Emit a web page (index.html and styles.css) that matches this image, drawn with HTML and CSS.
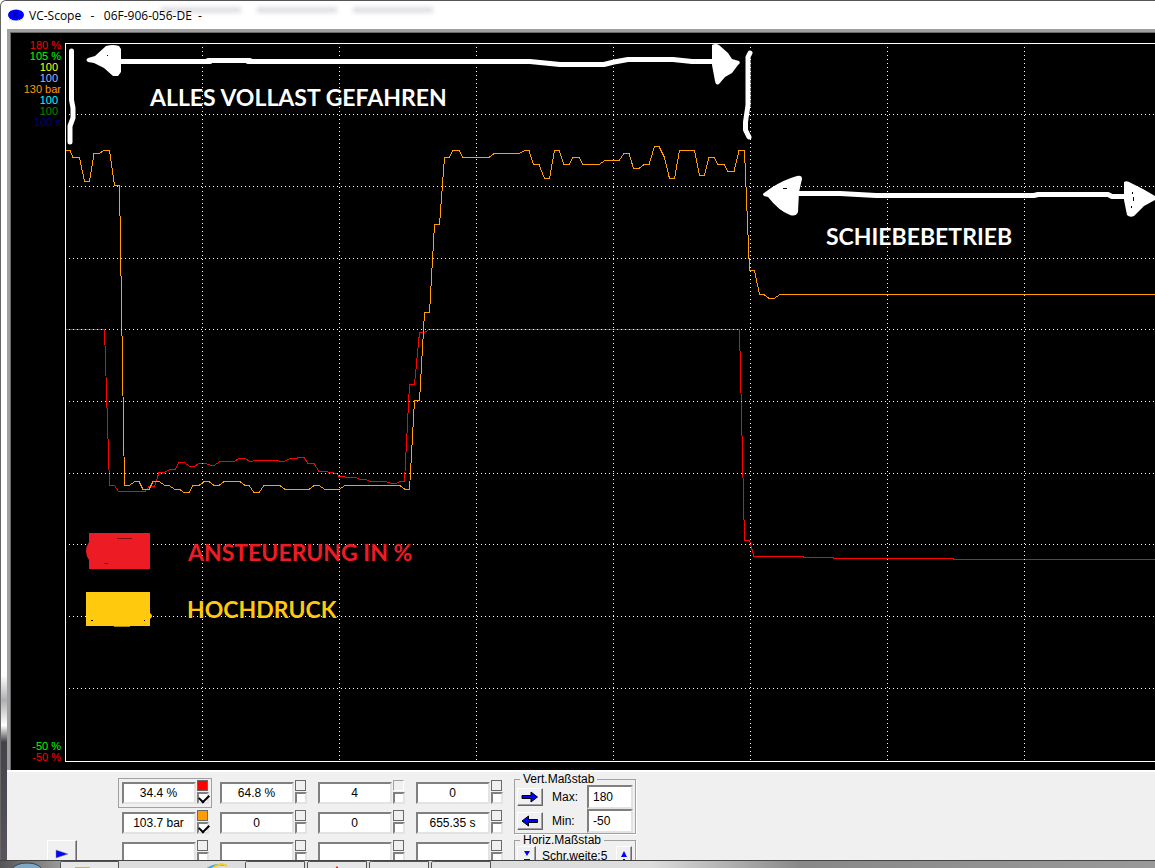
FILE: index.html
```
<!DOCTYPE html>
<html lang="de">
<head>
    <meta charset="UTF-8">
    <meta name="viewport" content="width=device-width, initial-scale=1.0">
    <title>VC-Scope</title>
    <link rel="stylesheet" href="styles.css">
</head>
<body>
    <header class="titlebar">
        <svg class="logo" width="17" height="14" viewBox="0 0 17 14">
            <ellipse cx="8" cy="7" rx="8" ry="5.5" fill="#0000ff"/>
            <path d="M6 4v6M10 4L6 7l4 3" stroke="#000090" fill="none"/>
            <path d="M1 12h3M10 12h5" stroke="#e0d060" stroke-dasharray="1 1"/>
        </svg>
        <h1>VC-Scope &nbsp; - &nbsp; 06F-906-056-DE &nbsp;-</h1>
        <div class="glass"><i></i><i></i><i></i></div>
    </header>

    <main class="client">
        <section class="scope">
            <div class="axis">
                <ul>
                    <li class="red">180 %</li>
                    <li class="green">105 %</li>
                    <li class="yellow unitless">100</li>
                    <li class="lilac unitless">100</li>
                    <li class="orange">130 bar</li>
                    <li class="cyan unitless">100</li>
                    <li class="darkgreen unitless">100</li>
                    <li class="navy">100 s</li>
                </ul>
                <ul>
                    <li class="green">-50 %</li>
                    <li class="red">-50 %</li>
                </ul>
            </div>
            <svg class="plot">
                <g transform="translate(-65 -33)">
                    <path class="frame" d="M3000 43.5H65.5V761.5H3000"/>

                    <!-- red: Ansteuerung, orange: Hochdruck -->
                    <polyline class="trace trace-red" points="66,329.5 104.5,329.5 109.5,485.5 114.5,485.5 118.5,491.5 145,491.5 149,486.5 154.5,486.5 159,472.5 164,472.5 170,469.5 175,469.5 179,462.5 184,462.5 190,466.5 194,466.5 199,463.5 206,463.5 211,465.5 214,465.5 220,461.5 234,461.5 239,458.5 245,458.5 250,461.5 256,460.5 278,460.5 280,461.5 284,461.5 290,458.5 296,458.5 299,457.5 304,457.5 308,463.5 314,463.5 319,471.5 325,471.5 337,473.5 339,476.5 350,477.5 356,477.5 360,479.5 366,479.5 370,481.5 386,481.5 391,483.5 396,483.5 400,481.5 404.5,481.5 409.5,384.5 414.5,384.5 419.5,332.5 424.5,332.5 429,329.5 739.5,329.5 744.5,540.5 749.5,540.5 754,556.5 803,556.5 803,557.5 833,557.5 833,558.5 953,558.5 953,559.5 3000,559.5"/>
                    <polyline class="trace trace-orange" points="66,150.5 70,150.5 73,157.5 79.5,157.5 84.5,181.5 89.5,181.5 94,153.5 99,153.5 104,150.5 109.5,150.5 114.5,185.5 119.5,185.5 124.5,485.5 129,485.5 135,481.5 139,481.5 143,489.5 149,489.5 153,481.5 159,481.5 165,485.5 169,485.5 175,489.5 180,489.5 184,492.5 189,492.5 193,485.5 199,485.5 204,481.5 209,481.5 214,485.5 219,485.5 224,481.5 240,481.5 245,485.5 249,485.5 254,492.5 259,492.5 264,485.5 280,485.5 285,489.5 309,489.5 314,485.5 319,485.5 325,489.5 339,489.5 345,485.5 400,485.5 405,489.5 409.5,489.5 414.5,400.5 419.5,400.5 424.5,312.5 429.5,312.5 434.5,224.5 439.5,224.5 444.5,157.5 449,157.5 453,150.5 459,150.5 463,157.5 489,157.5 494,153.5 519,153.5 525,150.5 529,150.5 533.5,164.5 539,164.5 544.5,178.5 549.5,178.5 554.5,150.5 559,150.5 564,164.5 569,164.5 573,157.5 579,157.5 583,164.5 599,164.5 605,160.5 619,160.5 624,153.5 629,153.5 633.5,168.5 639,168.5 644,164.5 649,164.5 654.5,146.5 659,146.5 664.5,157.5 669.5,178.5 674.5,178.5 679.5,150.5 694.5,150.5 699.5,175.5 704.5,175.5 709,157.5 714,157.5 718,164.5 724,164.5 728,171.5 734,171.5 739,150.5 744.5,150.5 749.5,270.5 754.5,270.5 759.5,294.5 764,294.5 769,298.5 774,298.5 780,294.5 3000,294.5"/>

                    <path class="grid-line" d="M69 114.5H3000M69 186.5H3000M69 258.5H3000M69 329.5H3000M69 401.5H3000M69 473.5H3000M69 544.5H3000M69 616.5H3000M69 688.5H3000"/>
                    <path class="grid-line" d="M202.5 47V761M339.5 47V761M476.5 47V761M613.5 47V761M750.5 47V761M887.5 47V761M1024.5 47V761M1161.5 47V761M1298.5 47V761M1435.5 47V761"/>

                    <!-- full load range -->
                    <g class="marker">
                        <path d="M71.500 51V100L73 108V118L70 126V142"/>
                        <path d="M118 61.500H210M208 60.500H250M248 61.500H530L560 64.500H604L614 62L628 59.500H673L692 61.500H716"/>
                        <path d="M750 53L748 57V105L745.500 122V130L749 137"/>
                    </g>
                    <path class="head" d="M88 58L95 56L106 46Q113 44 119 46L121 49V72L118 76H113L104 68L94 63L88 62Q85 60 88 58Z"/>
                    <path class="head" d="M712 45Q716 43 719 45L728 53L732 59L739 61Q741 63 738 65L732 73L725 77L719 84Q716 86 715 81L712 65Z"/>

                    <!-- overrun range -->
                    <g class="marker">
                        <path d="M796 193.500H840L876 195.500H1034L1038 194.500H1108L1112 196.500H1128"/>
                    </g>
                    <path class="head" d="M764 193L771 188Q783 180 797 176Q802 175 802 179L799 192L798 212Q796 217 790 215Q779 211 768 197L764 196Q762 194 764 193Z"/>
                    <path class="head" d="M1124 182Q1127 180 1131 183L1143 189L1155 196V200L1144 206L1134 216Q1130 218 1127 215L1124 200Z"/>
                    <path class="fleck" d="M783 188.500h4M1132.500 192v2M1133.500 197v4M1131.500 206v2M107 55.500h1"/>

                    <path fill="#ed1c24" d="M89 533h61v36H89v-9q-6-9 0-18z"/>
                    <path fill="#ffc90e" d="M86 592h64v21q4 3 0 6v7H86z"/>
                    <path stroke="#7c1015" d="M117 538.500h15M104 563.500h4"/>
                    <path class="fleck" d="M91 620.500h2M144 620.500h1"/>
                    <path stroke="#a98a10" d="M114 626.500h16"/>

                    <text class="note white" x="150" y="106">ALLES VOLLAST GEFAHREN</text>
                    <text class="note white" x="826" y="245">SCHIEBEBETRIEB</text>
                    <text class="note note-red" x="188" y="561">ANSTEUERUNG IN %</text>
                    <text class="note note-yellow" x="187" y="618">HOCHDRUCK</text>
                </g>
            </svg>
        </section>

        <section class="controls">
            <button class="raised play" aria-label="Start">
                <svg width="14" height="10" viewBox="0 0 14 10"><path d="M1 1l12 4-12 4z" fill="#00f" stroke="#888" stroke-width=".5"/></svg>
            </button>

            <div class="channels">
                <div class="channel selected"><input type="text" value="34.4 %" aria-label="Kanal 1"><span class="swatch bg-red"></span><input type="checkbox" checked aria-label="Kanal 1 anzeigen"></div>
                <div class="channel"><input type="text" value="64.8 %" aria-label="Kanal 2"><span class="swatch"></span><input type="checkbox" aria-label="Kanal 2 anzeigen"></div>
                <div class="channel"><input type="text" value="4" aria-label="Kanal 3"><span class="swatch faint"></span><input type="checkbox" aria-label="Kanal 3 anzeigen"></div>
                <div class="channel"><input type="text" value="0" aria-label="Kanal 4"><span class="swatch"></span><input type="checkbox" aria-label="Kanal 4 anzeigen"></div>
                <div class="channel"><input type="text" value="103.7 bar" aria-label="Kanal 5"><span class="swatch bg-orange"></span><input type="checkbox" checked aria-label="Kanal 5 anzeigen"></div>
                <div class="channel"><input type="text" value="0" aria-label="Kanal 6"><span class="swatch"></span><input type="checkbox" aria-label="Kanal 6 anzeigen"></div>
                <div class="channel"><input type="text" value="0" aria-label="Kanal 7"><span class="swatch"></span><input type="checkbox" aria-label="Kanal 7 anzeigen"></div>
                <div class="channel"><input type="text" value="655.35 s" aria-label="Kanal 8"><span class="swatch"></span><input type="checkbox" aria-label="Kanal 8 anzeigen"></div>
                <div class="channel"><input type="text" aria-label="Kanal 9"><span class="swatch"></span><input type="checkbox" aria-label="Kanal 9 anzeigen"></div>
                <div class="channel"><input type="text" aria-label="Kanal 10"><span class="swatch"></span><input type="checkbox" aria-label="Kanal 10 anzeigen"></div>
                <div class="channel"><input type="text" aria-label="Kanal 11"><span class="swatch"></span><input type="checkbox" aria-label="Kanal 11 anzeigen"></div>
                <div class="channel"><input type="text" aria-label="Kanal 12"><span class="swatch"></span><input type="checkbox" aria-label="Kanal 12 anzeigen"></div>
            </div>

            <div class="scales">
                <fieldset class="vert">
                    <legend>Vert.Maßstab</legend>
                    <button class="raised" aria-label="Weiter">
                        <svg width="18" height="12" viewBox="0 0 18 12"><path d="M1 4.500h9V1l6.500 5L10 11V7.500H1z" fill="#00f" stroke="#000"/></svg>
                    </button>
                    <label for="max">Max:</label>
                    <input type="text" id="max" value="180">
                    <button class="raised" aria-label="Zurück">
                        <svg width="18" height="12" viewBox="0 0 18 12"><path d="M16.500 4.500h-9V1L1 6l6.500 5V7.500h9z" fill="#00f" stroke="#000"/></svg>
                    </button>
                    <label for="min">Min:</label>
                    <input type="text" id="min" value="-50">
                </fieldset>
                <fieldset class="horiz">
                    <legend>Horiz.Maßstab</legend>
                    <button class="raised" aria-label="Kleiner">
                        <svg width="8" height="13" viewBox="0 0 8 13"><path d="M1 1h6L4 6zM1 9h6v4H1z" fill="#00f"/></svg>
                    </button>
                    <span>Schr.weite:5</span>
                    <button class="raised" aria-label="Größer">
                        <svg width="8" height="13" viewBox="0 0 8 13"><path d="M4 1l3 6H1zM3 9h2v4H3z" fill="#00f"/></svg>
                    </button>
                </fieldset>
            </div>
        </section>
    </main>

    <footer class="taskbar">
        <svg width="700" height="8" viewBox="0 0 700 8">
            <path d="M12 8Q16 2 27 2T42 8z" fill="#7fa8c4" stroke="#345"/>
            <g fill="#e6e6e6" stroke="#555">
                <path d="M60.500 9V1.500q0-1 2-1H118.500V9"/>
                <path d="M245.500 9V1.500q0-1 2-1H304.500V9"/>
                <path d="M307.500 9V1.500q0-1 2-1H366.500V9"/>
                <path d="M369.500 9V1.500q0-1 2-1H428.500V9"/>
                <path d="M431.500 9V1.500q0-1 2-1H490.500V9"/>
            </g>
            <path d="M75 7h15" stroke="#c4b078" stroke-width="2"/>
            <path d="M207 8Q215 3 224 4" fill="none" stroke="#4aa3dc" stroke-width="2"/>
            <path d="M214 6Q222 1 227 5" fill="none" stroke="#f2d21c" stroke-width="2"/>
            <path d="M335 8l2-3 2 3z" fill="#f00"/>
        </svg>
    </footer>
</body>
</html>
```

FILE: styles.css
```
* {
    margin: 0;
    padding: 0;
    box-sizing: border-box;
}

body {
    height: 100vh;
    display: flex;
    flex-direction: column;
    overflow: hidden;
    font-family: "Liberation Sans", Arial, sans-serif;
    font-size: 12px;
    color: #000;
    background-color: #fff;
    border-top: 1px solid #555;
    border-left: 1px solid #666;
    border-top-left-radius: 6px;
}

.titlebar {
    position: relative;
    flex: none;
    display: flex;
    align-items: center;
    gap: 4px;
    height: 28px;
    padding-left: 7px;
}

.titlebar h1 {
    position: relative;
    z-index: 1;
    font-family: "Open Sans", "Noto Sans", sans-serif;
    font-size: 12px;
    font-weight: normal;
}

/* window content shining through the title bar */
.glass {
    position: absolute;
    left: 160px;
    top: 6px;
    display: flex;
    gap: 16px;
    filter: blur(2px);
}

.glass i {
    width: 80px;
    height: 6px;
    background-color: #e0e0e4;
}

.client {
    flex: 1;
    min-height: 0;
    display: flex;
    flex-direction: column;
    padding-left: 6px;
    background: linear-gradient(#fff 77%, #b0b0b4 80%, #fff 83%, #45424a 85%, #5a5560);
}

.scope {
    flex: 1;
    min-height: 0;
    display: flex;
    padding: 1px 0 0 1px;
    background-color: #000;
    border-style: solid;
    border-color: #a0a0a0;
    border-width: 3px 0 0 3px;
    box-shadow: inset 1px 1px #696969;
}

.axis {
    flex: none;
    display: flex;
    flex-direction: column;
    justify-content: space-between;
    width: 54px;
    padding: 7px 4px 7px 0;
    font-size: 11px;
    line-height: 11px;
    text-align: right;
}

.axis ul {
    list-style: none;
}

.unitless {
    padding-right: 3px;
}

.red { color: #f00; }
.green { color: #0f0; }
.yellow { color: #ff0; }
.lilac { color: #aab4ff; }
.orange { color: #ff9900; }
.cyan { color: #0ff; }
.darkgreen { color: #008c00; }
.navy { color: #000080; }

.plot {
    flex: 1;
    min-width: 0;
    height: 100%;
}

.frame {
    fill: none;
    stroke: #fff;
    shape-rendering: crispEdges;
}

.grid-line {
    fill: none;
    stroke: #fff;
    stroke-dasharray: 1 3;
    shape-rendering: crispEdges;
}

.trace {
    fill: none;
    shape-rendering: crispEdges;
}

.trace-red { stroke: #f00; }
.trace-orange { stroke: #ffa000; }

.marker {
    fill: none;
    stroke: #fff;
    stroke-width: 5px;
    stroke-linecap: round;
    stroke-linejoin: round;
}

.head {
    fill: #fff;
}

.fleck {
    stroke: #000;
}

.note {
    font-family: Lato, "Open Sans", sans-serif;
    font-size: 23px;
    font-weight: bold;
}

.white { fill: #fff; }
.note-red { fill: #ed1c24; }
.note-yellow { fill: #ffc90e; }

.controls {
    flex: none;
    display: flex;
    height: 98px;
    padding: 8px 0 0 40px;
    overflow: hidden;
    background-color: #f0f0f0;
    border-top: 2px solid #fff;
}

.raised {
    display: flex;
    align-items: center;
    justify-content: center;
    background-color: #f0f0f0;
    border: 1px solid;
    border-color: #fff #696969 #696969 #fff;
    box-shadow: inset -1px -1px #a0a0a0;
}

.play {
    width: 30px;
    height: 28px;
    margin-top: 60px;
}

.channels {
    display: grid;
    grid-template-columns: repeat(4, 94px);
    grid-auto-rows: 30px;
    column-gap: 4px;
    margin-left: 41px;
    margin-top: -2px;
}

.channel {
    display: grid;
    grid-template-columns: 74px 12px;
    grid-template-rows: 12px 12px;
    column-gap: 1px;
    padding-top: 1px;
    justify-content: center;
    border: 1px solid transparent;
}

.selected {
    border-color: #a0a0a0;
}

input[type="text"] {
    min-width: 0;
    font-family: inherit;
    font-size: 12px;
    color: #000;
    background-color: #fff;
    border: 2px solid;
    border-color: #808080 #e3e3e3 #e3e3e3 #808080;
    border-radius: 0;
}

.channel input[type="text"] {
    grid-row: 1 / 3;
    margin-top: 2px;
    text-align: center;
}

.swatch {
    width: 11px;
    height: 11px;
    border: 1px solid #696969;
    background-color: #f0f0f0;
}

.faint {
    border-color: #a0a0a0 #fff #fff #a0a0a0;
}

.bg-red { background-color: #f00; }
.bg-orange { background-color: #ff9c00; }

input[type="checkbox"] {
    appearance: none;
    width: 12px;
    height: 12px;
    background-color: #fff;
    border: 2px solid;
    border-color: #808080 #e3e3e3 #e3e3e3 #808080;
}

input[type="checkbox"]:checked::before {
    content: "";
    display: block;
    width: 8px;
    height: 5px;
    border: solid #000;
    border-width: 0 0 2px 2px;
    transform: rotate(-45deg);
}

.scales {
    display: flex;
    flex-direction: column;
    width: 122px;
    margin-left: 8px;
    margin-top: -7px;
}

fieldset {
    display: grid;
    align-items: center;
    border: 1px solid #a0a0a0;
    box-shadow: 1px 1px #fff;
}

legend {
    margin-left: 3px;
    padding: 0 3px;
    line-height: 12px;
}

.vert {
    grid-template-columns: 26px 36px 46px;
    grid-auto-rows: 24px;
    column-gap: 4px;
    padding: 0 2px;
}

.vert .raised {
    height: 18px;
}

.vert label {
    padding-left: 5px;
}

.vert input {
    height: 24px;
    padding-left: 4px;
}

.horiz {
    grid-template-columns: 19px 76px 16px;
    column-gap: 2px;
    padding: 0 2px;
}

.horiz .raised {
    height: 20px;
}

.horiz span {
    padding-left: 4px;
    line-height: 14px;
    white-space: nowrap;
}

.taskbar {
    position: fixed;
    left: 0;
    right: 0;
    bottom: 0;
    height: 8px;
    overflow: hidden;
    border-top: 1px solid #444;
    background: linear-gradient(90deg, #555, #ddd 120px, #ddd 650px, #888 800px, #999);
}

.taskbar svg {
    display: block;
}
```
